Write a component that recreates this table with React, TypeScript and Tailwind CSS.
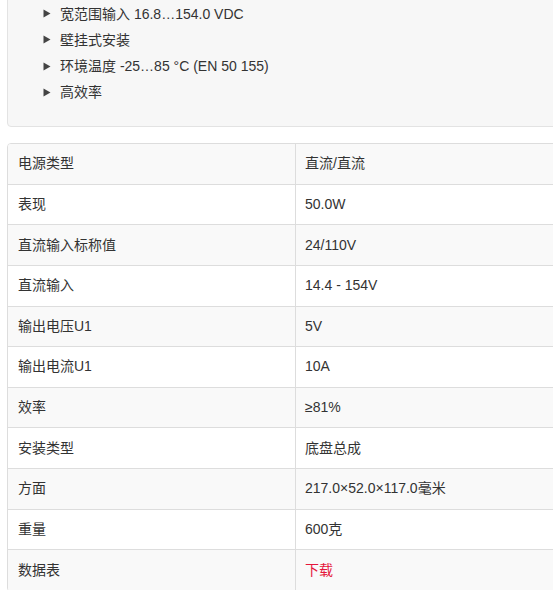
import { Fragment } from 'react'

const features = [
  '宽范围输入 16.8…154.0 VDC',
  '壁挂式安装',
  '环境温度 -25…85 °C (EN 50 155)',
  '高效率',
]

const specs: { label: string; value: string; link?: boolean }[] = [
  { label: '电源类型', value: '直流/直流' },
  { label: '表现', value: '50.0W' },
  { label: '直流输入标称值', value: '24/110V' },
  { label: '直流输入', value: '14.4 - 154V' },
  { label: '输出电压U1', value: '5V' },
  { label: '输出电流U1', value: '10A' },
  { label: '效率', value: '≥81%' },
  { label: '安装类型', value: '底盘总成' },
  { label: '方面', value: '217.0×52.0×117.0毫米' },
  { label: '重量', value: '600克' },
  { label: '数据表', value: '下载', link: true },
]

function Bullet() {
  return (
    <svg width="8" height="9" viewBox="0 0 8 9" className="shrink-0">
      <path d="M0.5 0.5 L7.5 4.5 L0.5 8.5 Z" fill="#444" />
    </svg>
  )
}

export default function App() {
  return (
    <div
      className="w-[553px] h-[590px] overflow-hidden bg-white text-[14px] text-[#333]"
      style={{ fontFamily: '"Liberation Sans", "Noto Sans CJK SC", sans-serif' }}
    >
      {/* Features panel */}
      <div className="ml-[7px] -mt-[20px] w-[560px] bg-[#f7f7f7] border border-[#e3e3e3] rounded-[4px] pt-[19.5px] pb-[20.5px]">
        <ul className="pl-[35px]">
          {features.map((f) => (
            <li key={f} className="flex items-center gap-[9px] leading-[26.3px]">
              <Bullet />
              <span>{f}</span>
            </li>
          ))}
        </ul>
      </div>

      {/* Specs table */}
      <div className="ml-[7px] mt-[16px] w-[560px] border border-[#ddd] rounded-[4px] overflow-hidden">
        <div className="grid grid-cols-[287px_1fr]">
          {specs.map((s, i) => {
            const bg = i % 2 === 0 ? 'bg-[#f9f9f9]' : 'bg-white'
            const border = i < specs.length - 1 ? 'border-b border-[#ddd]' : ''
            return (
              <Fragment key={s.label}>
                <div className={`h-[40.6px] flex items-center px-[10px] ${bg} ${border}`}>
                  {s.label}
                </div>
                <div className={`h-[40.6px] flex items-center pl-[9px] border-l border-l-[#ddd] ${bg} ${border}`}>
                  {s.link ? <a className="text-[#e5173c] cursor-pointer">{s.value}</a> : s.value}
                </div>
              </Fragment>
            )
          })}
        </div>
      </div>
    </div>
  )
}
